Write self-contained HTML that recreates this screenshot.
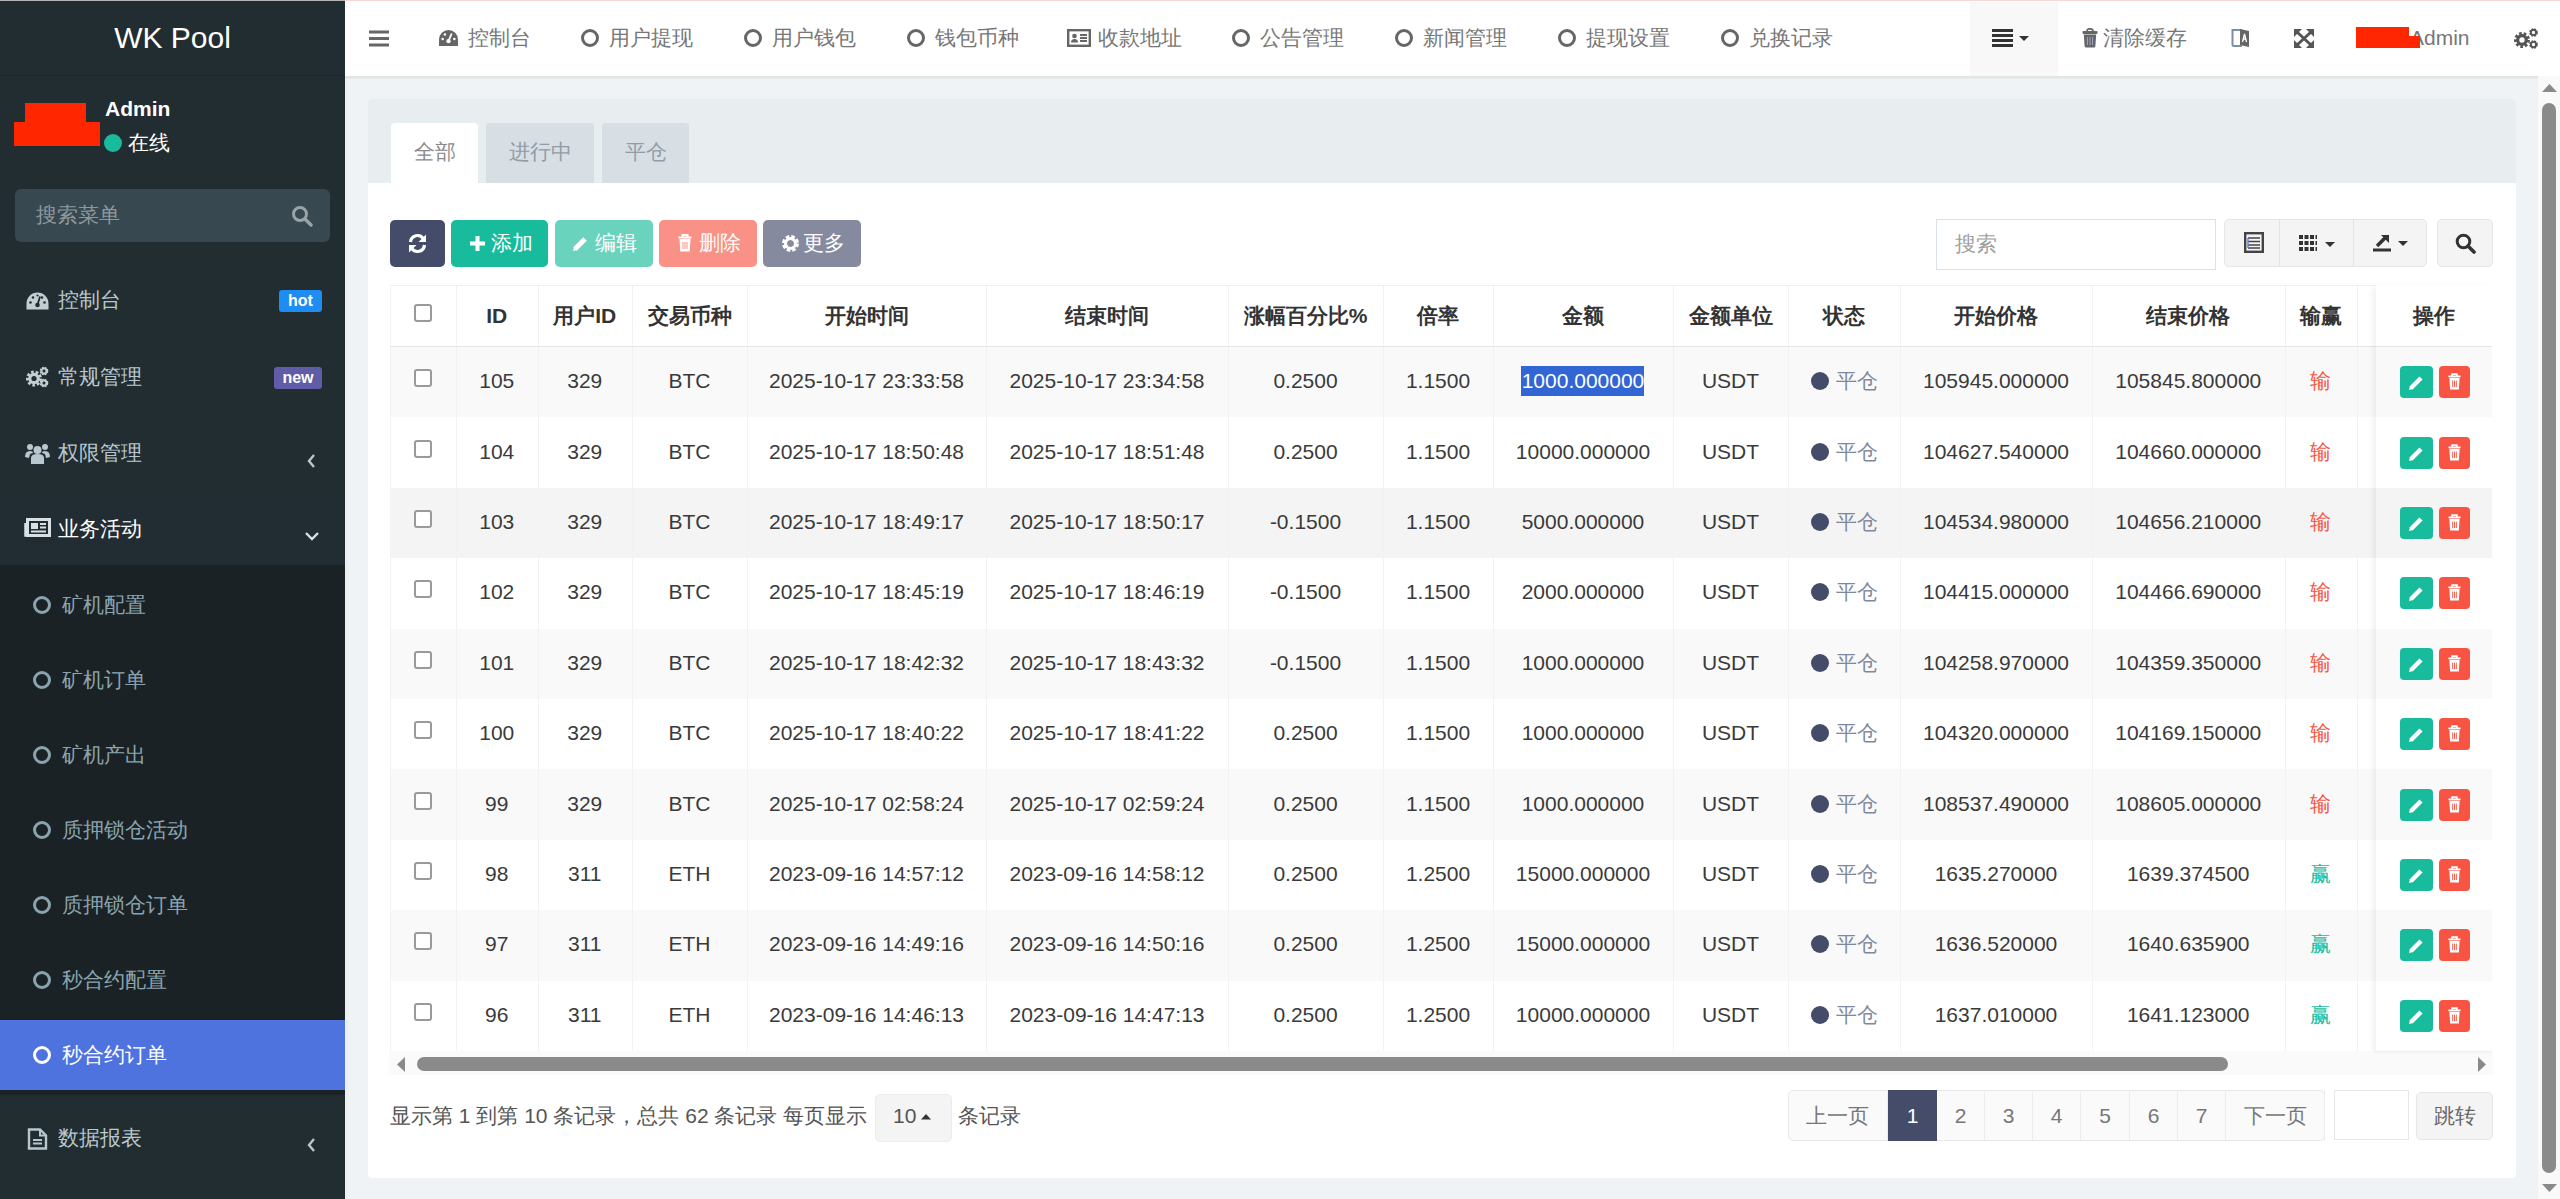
<!DOCTYPE html>
<html><head><meta charset="utf-8">
<style>
*{box-sizing:border-box;margin:0;padding:0}
html,body{width:2560px;height:1199px;overflow:hidden;background:#eff3f6;font-family:"Liberation Sans",sans-serif;font-size:21px;color:#333}
.abs{position:absolute}
#side{position:absolute;left:0;top:0;width:345px;height:1199px;background:#222d32}
#logo{position:absolute;left:0;top:0;width:345px;height:76px;border-bottom:1px solid #1d262a;color:#fff;font-size:30px;text-align:center;line-height:76px}
.menu{position:absolute;left:0;width:345px;color:#b8c7ce;font-size:21px}
.menu .t{position:absolute;left:58px}
.sub{background:#1b2226}
.sub .t{left:62px;color:#8aa4af}
.circ{position:absolute;left:33px;width:18px;height:18px;border:3px solid #8aa4af;border-radius:50%}
#hdr{position:absolute;left:345px;top:0;width:2215px;height:76px;background:#fff}
.nav{position:absolute;top:0;height:76px;line-height:76px;color:#777;font-size:21px}
.ncirc{position:absolute;top:29px;width:18px;height:18px;border:3px solid #666;border-radius:50%}




</style></head><body>
<div id="side">
  <div id="logo">WK Pool</div>
  <div class="abs" style="left:0;top:0;width:345px;height:1px;background:#b3b3b3"></div>
  
  <div class="abs" style="left:25px;top:103px;width:61px;height:20px;background:#ff2600"></div>
  <div class="abs" style="left:14px;top:122px;width:86px;height:24px;background:#ff2600"></div>
  <div class="abs" style="left:105px;top:95px;color:#fff;font-weight:bold;font-size:21px;line-height:28px">Admin</div>
  <div class="abs" style="left:104px;top:134px;width:18px;height:18px;border-radius:50%;background:#18bc9c"></div>
  <div class="abs" style="left:128px;top:128px;color:#fff;font-size:21px;line-height:30px">在线</div>
  <div class="abs" style="left:15px;top:189px;width:315px;height:53px;background:#374850;border-radius:6px"></div>
  <div class="abs" style="left:36px;top:200px;color:#8d989d;font-size:21px;line-height:30px">搜索菜单</div>
  <svg class="abs" style="left:291px;top:205px" width="22" height="22" viewBox="0 0 22 22"><circle cx="9" cy="9" r="6.5" fill="none" stroke="#9aa3a7" stroke-width="3"/><path d="M14 14 L20 20" stroke="#9aa3a7" stroke-width="3.4" stroke-linecap="round"/></svg>

  <div class="menu" style="top:262px;height:76px">
    <svg class="abs" style="left:26px;top:30px" width="23" height="18" viewBox="0 0 23 18"><path d="M11.5 0.5 A11 11 0 0 0 0.5 11.5 L0.5 17.5 L22.5 17.5 L22.5 11.5 A11 11 0 0 0 11.5 0.5Z" fill="#c3ced3"/><circle cx="11.5" cy="13" r="2.3" fill="#222d32"/><path d="M11.5 13 L14 4.5" stroke="#222d32" stroke-width="1.8"/><circle cx="4.5" cy="10.5" r="1.3" fill="#222d32"/><circle cx="7" cy="5.5" r="1.3" fill="#222d32"/><circle cx="11.5" cy="3.5" r="1.1" fill="#222d32"/><circle cx="16" cy="5.5" r="1.3" fill="#222d32"/><circle cx="18.5" cy="10.5" r="1.3" fill="#222d32"/></svg>
    <span class="t" style="top:23px;line-height:30px">控制台</span>
    <div class="abs" style="left:279px;top:28px;width:43px;height:22px;background:#1e8cf0;border-radius:3px;color:#fff;font-weight:bold;font-size:16px;line-height:22px;text-align:center">hot</div>
  </div>
  <div class="menu" style="top:339px;height:76px">
    <svg class="abs" style="left:26px;top:27px" width="23" height="22" viewBox="0 0 23 22"><circle cx="8" cy="12.5" r="6" fill="none" stroke="#c3ced3" stroke-width="4" stroke-dasharray="2.4 1.75"/><circle cx="8" cy="12.5" r="4.2" fill="none" stroke="#c3ced3" stroke-width="3.2"/><circle cx="18" cy="5" r="3" fill="none" stroke="#c3ced3" stroke-width="2.6" stroke-dasharray="1.6 0.8"/><circle cx="18" cy="5" r="2.6" fill="none" stroke="#c3ced3" stroke-width="1.8"/><circle cx="18" cy="17" r="3" fill="none" stroke="#c3ced3" stroke-width="2.6" stroke-dasharray="1.6 0.8"/><circle cx="18" cy="17" r="2.6" fill="none" stroke="#c3ced3" stroke-width="1.8"/></svg>
    <span class="t" style="top:23px;line-height:30px">常规管理</span>
    <div class="abs" style="left:274px;top:28px;width:48px;height:22px;background:#605ca8;border-radius:3px;color:#fff;font-weight:bold;font-size:16px;line-height:21px;text-align:center">new</div>
  </div>
  <div class="menu" style="top:415px;height:76px">
    <svg class="abs" style="left:25px;top:27px" width="25" height="22" viewBox="0 0 25 22"><circle cx="12.5" cy="8" r="4" fill="#b8c7ce"/><circle cx="5" cy="5" r="3" fill="#b8c7ce"/><circle cx="20" cy="5" r="3" fill="#b8c7ce"/><path d="M6 22 L6 16 Q6 12 12.5 12 Q19 12 19 16 L19 22Z" fill="#b8c7ce"/><path d="M0 15 Q0 9 5 9 Q8 9 8 11 L5 12 L4 16Z" fill="#b8c7ce"/><path d="M25 15 Q25 9 20 9 Q17 9 17 11 L20 12 L21 16Z" fill="#b8c7ce"/></svg>
    <span class="t" style="top:23px;line-height:30px">权限管理</span>
    <svg class="abs" style="left:306px;top:38px" width="10" height="16" viewBox="0 0 10 16"><path d="M8 2 L3 8 L8 14" fill="none" stroke="#b8c7ce" stroke-width="2.4"/></svg>
  </div>
  <div class="menu" style="top:491px;height:74px;background:#222d33">
    <svg class="abs" style="left:24px;top:27px" width="27" height="19" viewBox="0 0 27 19"><rect x="3.5" y="1.5" width="22" height="16" fill="none" stroke="#d8e0e3" stroke-width="3"/><path d="M1.5 5 L1.5 17.5 L4 17.5" fill="none" stroke="#d8e0e3" stroke-width="2.5"/><rect x="7" y="5" width="7" height="6" fill="#d8e0e3"/><path d="M16 6 H22 M16 9.5 H22 M7 13.5 H22" stroke="#d8e0e3" stroke-width="2"/></svg>
    <span class="t" style="top:23px;line-height:30px;color:#fff">业务活动</span>
    <svg class="abs" style="left:304px;top:40px" width="16" height="10" viewBox="0 0 16 10"><path d="M2 2 L8 8 L14 2" fill="none" stroke="#d8e0e3" stroke-width="2.4"/></svg>
  </div>
  <div class="menu sub" style="top:565px;height:530px">
    <div class="circ" style="top:31px"></div><span class="t" style="top:25px;line-height:30px">矿机配置</span>
    <div class="circ" style="top:106px"></div><span class="t" style="top:100px;line-height:30px">矿机订单</span>
    <div class="circ" style="top:181px"></div><span class="t" style="top:175px;line-height:30px">矿机产出</span>
    <div class="circ" style="top:256px"></div><span class="t" style="top:250px;line-height:30px">质押锁仓活动</span>
    <div class="circ" style="top:331px"></div><span class="t" style="top:325px;line-height:30px">质押锁仓订单</span>
    <div class="circ" style="top:406px"></div><span class="t" style="top:400px;line-height:30px">秒合约配置</span>
    <div class="abs" style="left:0;top:455px;width:345px;height:70px;background:#4e73df"></div>
    <div class="circ" style="top:481px;border-color:#fff"></div><span class="t" style="top:475px;line-height:30px;color:#fff">秒合约订单</span>
  </div>
  <div class="menu" style="top:1095px;height:100px">
    <svg class="abs" style="left:27px;top:33px" width="21" height="22" viewBox="0 0 21 22"><path d="M2 1.5 H13 L19 7.5 V20.5 H2Z" fill="none" stroke="#b8c7ce" stroke-width="2.4"/><path d="M13 1.5 V7.5 H19" fill="none" stroke="#b8c7ce" stroke-width="2"/><path d="M6 12 H15 M6 15.5 H15" stroke="#b8c7ce" stroke-width="2"/></svg>
    <span class="t" style="top:28px;line-height:30px">数据报表</span>
    <svg class="abs" style="left:306px;top:42px" width="10" height="16" viewBox="0 0 10 16"><path d="M8 2 L3 8 L8 14" fill="none" stroke="#b8c7ce" stroke-width="2.4"/></svg>
  </div>
</div>
<div class="abs" style="left:345px;top:76px;width:3px;height:1123px;background:#edf0f0"></div>
<div class="abs" style="left:345px;top:75px;width:2215px;height:1px;background:#f0f1f1"></div>
<div class="abs" style="left:345px;top:76px;width:2215px;height:2px;background:#e3e5e5"></div>
<div class="abs" style="left:345px;top:78px;width:2215px;height:1px;background:#e8ebed"></div>
<div id="hdr"><div class="abs" style="left:0;top:0;width:2215px;height:1px;background:#f6d6d6"></div><svg class="abs" style="left:24px;top:30px" width="20" height="17" viewBox="0 0 20 17"><path d="M0 2 H20 M0 8.5 H20 M0 15 H20" stroke="#666" stroke-width="3"/></svg><svg class="abs" style="left:93px;top:29px" width="21" height="18" viewBox="0 0 23 20"><path d="M11.5 1 A10.5 10.5 0 0 0 1 11.5 L1 19 L22 19 L22 11.5 A10.5 10.5 0 0 0 11.5 1Z" fill="#666"/><circle cx="11.5" cy="13.5" r="2.4" fill="#fff"/><path d="M11.5 13.5 L15 5" stroke="#fff" stroke-width="2"/><circle cx="5" cy="11" r="1.4" fill="#fff"/><circle cx="7.5" cy="6" r="1.4" fill="#fff"/><circle cx="18" cy="11" r="1.4" fill="#fff"/></svg><span class="nav" style="left:123px;color:#777">控制台</span><div class="ncirc" style="left:236px"></div><span class="nav" style="left:264px;color:#777">用户提现</span><div class="ncirc" style="left:399px"></div><span class="nav" style="left:427px;color:#777">用户钱包</span><div class="ncirc" style="left:562px"></div><span class="nav" style="left:590px;color:#777">钱包币种</span><div class="ncirc" style="left:887px"></div><span class="nav" style="left:915px;color:#777">公告管理</span><div class="ncirc" style="left:1050px"></div><span class="nav" style="left:1078px;color:#777">新闻管理</span><div class="ncirc" style="left:1213px"></div><span class="nav" style="left:1241px;color:#777">提现设置</span><div class="ncirc" style="left:1376px"></div><span class="nav" style="left:1404px;color:#777">兑换记录</span><svg class="abs" style="left:722px;top:29px" width="24" height="18" viewBox="0 0 24 18"><rect x="1.2" y="1.2" width="21.6" height="15.6" fill="none" stroke="#666" stroke-width="2.4"/><circle cx="7.5" cy="7" r="2.3" fill="#666"/><path d="M4 13.5 Q4 10 7.5 10 Q11 10 11 13.5Z" fill="#666"/><path d="M13 6 H20 M13 9 H20 M13 12 H20" stroke="#666" stroke-width="1.8"/></svg><span class="nav" style="left:753px;color:#777">收款地址</span><div class="abs" style="left:1625px;top:2px;width:88px;height:74px;background:#f8f8f8"></div><svg class="abs" style="left:1647px;top:28px" width="44" height="20" viewBox="0 0 44 20"><path d="M0 2.5 H21 M0 7.5 H21 M0 12.5 H21 M0 17.5 H21" stroke="#333" stroke-width="3.2"/><path d="M27 8 H37 L32 13Z" fill="#333"/></svg><svg class="abs" style="left:1737px;top:28px" width="16" height="20" viewBox="0 0 16 20"><path d="M5 3 Q5 0.8 8 0.8 Q11 0.8 11 3" fill="none" stroke="#666" stroke-width="1.8"/><rect x="0.5" y="3" width="15" height="3" rx="1" fill="#666"/><path d="M1.8 6.5 H14.2 L13.4 18 Q13.3 19.5 11.8 19.5 H4.2 Q2.7 19.5 2.6 18Z" fill="#666"/><path d="M5.5 9 V17 M8 9 V17 M10.5 9 V17" stroke="#9aa3c0" stroke-width="1"/></svg><span class="nav" style="left:1758px;color:#777">清除缓存</span><svg class="abs" style="left:1886px;top:27px" width="20" height="21" viewBox="0 0 20 21"><path d="M1.5 3 H10 V19 H3 Q1.5 19 1.5 17.5Z" fill="none" stroke="#7a8fa8" stroke-width="2"/><path d="M9 2 L18 4 V20 L9 18Z" fill="#666"/><path d="M11.5 15 L13.5 7 L15.5 15 M12.3 12 H14.7" stroke="#fff" stroke-width="1.3" fill="none"/></svg><svg class="abs" style="left:1949px;top:29px" width="20" height="19" viewBox="0 0 20 19"><path d="M3 3 L17 16 M17 3 L3 16" stroke="#555" stroke-width="3"/><path d="M0 0 H8 L0 8Z M20 0 H12 L20 8Z M0 19 H8 L0 11Z M20 19 H12 L20 11Z" fill="#555"/></svg><div class="abs" style="left:2011px;top:27px;width:53px;height:21px;background:#ff2600;z-index:2"></div><div class="abs" style="left:2011px;top:36px;width:64px;height:12px;background:#ff2600;z-index:2"></div><span class="nav" style="left:2065px;color:#777">Admin</span><svg class="abs" style="left:2168px;top:28px" width="26" height="21" viewBox="0 0 26 21"><circle cx="9" cy="12" r="6" fill="none" stroke="#555" stroke-width="4" stroke-dasharray="2.4 1.75"/><circle cx="9" cy="12" r="4.3" fill="none" stroke="#555" stroke-width="3.2"/><circle cx="20.5" cy="4.5" r="3" fill="none" stroke="#555" stroke-width="2.6" stroke-dasharray="1.6 0.8"/><circle cx="20.5" cy="4.5" r="2.6" fill="none" stroke="#555" stroke-width="1.8"/><circle cx="20.5" cy="16.5" r="3" fill="none" stroke="#555" stroke-width="2.6" stroke-dasharray="1.6 0.8"/><circle cx="20.5" cy="16.5" r="2.6" fill="none" stroke="#555" stroke-width="1.8"/></svg></div>
<div id="main">
<div class="abs" style="left:368px;top:99px;width:2148px;height:1079px;background:#fff;border-radius:4px"></div>
<div class="abs" style="left:368px;top:99px;width:2148px;height:84px;background:#e8edf0;border-radius:4px 4px 0 0"></div>
<div class="abs" style="left:391px;top:123px;width:87px;height:60px;background:#fff;border-radius:4px 4px 0 0;color:#8a8a8a;text-align:center;line-height:58px">全部</div>
<div class="abs" style="left:486px;top:123px;width:108px;height:60px;background:#d7dfe5;border-radius:4px 4px 0 0;color:#929ca7;text-align:center;line-height:58px">进行中</div>
<div class="abs" style="left:602px;top:123px;width:87px;height:60px;background:#d7dfe5;border-radius:4px 4px 0 0;color:#929ca7;text-align:center;line-height:58px">平仓</div>
<div class="abs" style="left:390px;top:220px;width:55px;height:47px;background:#444c69;border-radius:5px"></div>
<svg class="abs" style="left:407px;top:233px" width="21" height="21" viewBox="0 0 21 21"><path d="M3.5 9 A7 7 0 0 1 16.5 6" fill="none" stroke="#fff" stroke-width="3.2"/><path d="M19 1.5 V9 H11.5Z" fill="#fff"/><path d="M17.5 12 A7 7 0 0 1 4.5 15" fill="none" stroke="#fff" stroke-width="3.2"/><path d="M2 19.5 V12 H9.5Z" fill="#fff"/></svg>
<div class="abs" style="left:451px;top:220px;width:97px;height:47px;background:#18bc9c;border-radius:5px"></div>
<svg class="abs" style="left:469px;top:235px" width="17" height="17" viewBox="0 0 17 17"><path d="M8.5 1 V16 M1 8.5 H16" stroke="#fff" stroke-width="4"/></svg>
<span class="abs" style="left:491px;top:228px;line-height:30px;color:#fff;font-size:21px">添加</span>
<div class="abs" style="left:555px;top:220px;width:98px;height:47px;background:#6ad3bd;border-radius:5px"></div>
<svg class="abs" style="left:572px;top:235px" width="17" height="17" viewBox="0 0 17 17"><path d="M3 14 L13 4" stroke="#fff" stroke-width="5"/><path d="M1 16 L2 12 L5 15Z" fill="#fff"/></svg>
<span class="abs" style="left:595px;top:228px;line-height:30px;color:#fff;font-size:21px">编辑</span>
<div class="abs" style="left:659px;top:220px;width:98px;height:47px;background:#fa9186;border-radius:5px"></div>
<svg class="abs" style="left:678px;top:234px" width="14" height="18" viewBox="0 0 14 18"><path d="M0.5 3.5 H13.5 M4.5 3.5 V1 H9.5 V3.5" stroke="#fff" stroke-width="2" fill="none"/><path d="M1.5 5 H12.5 L11.7 17.5 H2.3Z" fill="#fff"/><path d="M5 8 V15 M7 8 V15 M9 8 V15" stroke="#fa9186" stroke-width="1"/></svg>
<span class="abs" style="left:699px;top:228px;line-height:30px;color:#fff;font-size:21px">删除</span>
<div class="abs" style="left:763px;top:220px;width:98px;height:47px;background:#858a9e;border-radius:5px"></div>
<svg class="abs" style="left:781px;top:234px" width="19" height="19" viewBox="0 0 19 19"><circle cx="9.5" cy="9.5" r="6" fill="none" stroke="#fff" stroke-width="5" stroke-dasharray="3 1.7"/><circle cx="9.5" cy="9.5" r="5" fill="none" stroke="#fff" stroke-width="3"/></svg>
<span class="abs" style="left:803px;top:228px;line-height:30px;color:#fff;font-size:21px">更多</span>
<div class="abs" style="left:1936px;top:219px;width:280px;height:51px;border:1px solid #d9e0e6;background:#fff"></div>
<span class="abs" style="left:1955px;top:229px;line-height:30px;color:#a0a0a0">搜索</span>
<div class="abs" style="left:2224px;top:219px;width:203px;height:48px;border:1px solid #e6e6e6;background:#f4f4f4;border-radius:5px"></div>
<div class="abs" style="left:2279px;top:219px;width:1px;height:48px;background:#e3e3e3"></div>
<div class="abs" style="left:2353px;top:219px;width:1px;height:48px;background:#e3e3e3"></div>
<svg class="abs" style="left:2244px;top:232px" width="20" height="21" viewBox="0 0 20 21"><rect x="1.2" y="1.2" width="17.6" height="18.6" fill="none" stroke="#444" stroke-width="2.4"/><path d="M4 6 H16 M4 9.5 H16 M4 13 H16 M4 16 H16" stroke="#444" stroke-width="1.6"/><path d="M4 6 V16" stroke="#5d7fd6" stroke-width="1.4"/></svg>
<svg class="abs" style="left:2299px;top:234px" width="40" height="18" viewBox="0 0 40 18"><path d="M0 3 H18 M0 9 H18 M0 15 H18" stroke="#333" stroke-width="4" stroke-dasharray="4 1.5"/><path d="M26 8 H36 L31 13Z" fill="#333"/></svg>
<svg class="abs" style="left:2372px;top:232px" width="40" height="20" viewBox="0 0 40 20"><path d="M1 18 H19" stroke="#333" stroke-width="3"/><path d="M5 14 L13 6" stroke="#333" stroke-width="3.5"/><path d="M9 3 H17 V11Z" fill="#333"/><path d="M26 9 H36 L31 14Z" fill="#333"/></svg>
<div class="abs" style="left:2437px;top:219px;width:56px;height:48px;border:1px solid #e6e6e6;background:#f4f4f4;border-radius:5px"></div>
<svg class="abs" style="left:2455px;top:233px" width="21" height="21" viewBox="0 0 21 21"><circle cx="8.5" cy="8.5" r="6.3" fill="none" stroke="#333" stroke-width="3"/><path d="M13 13 L19 19" stroke="#333" stroke-width="3.6" stroke-linecap="round"/></svg>
<div class="abs" style="left:390px;top:285px;width:2102px;height:62px;background:#fff;border-top:1px solid #f0f0f0"></div>
<div class="abs" style="left:390px;top:347.0px;width:2102px;height:70.4px;background:#f9f9f9"></div>
<div class="abs" style="left:390px;top:417.4px;width:2102px;height:70.4px;background:#fff"></div>
<div class="abs" style="left:390px;top:487.8px;width:2102px;height:70.4px;background:#f4f4f4"></div>
<div class="abs" style="left:390px;top:558.2px;width:2102px;height:70.4px;background:#fff"></div>
<div class="abs" style="left:390px;top:628.6px;width:2102px;height:70.4px;background:#f9f9f9"></div>
<div class="abs" style="left:390px;top:699.0px;width:2102px;height:70.4px;background:#fff"></div>
<div class="abs" style="left:390px;top:769.4px;width:2102px;height:70.4px;background:#f9f9f9"></div>
<div class="abs" style="left:390px;top:839.8px;width:2102px;height:70.4px;background:#fff"></div>
<div class="abs" style="left:390px;top:910.2px;width:2102px;height:70.4px;background:#f9f9f9"></div>
<div class="abs" style="left:390px;top:980.6px;width:2102px;height:70.4px;background:#fff"></div>
<div class="abs" style="left:390px;top:285px;width:1px;height:766.0px;background:#f2f2f2"></div>
<div class="abs" style="left:456px;top:285px;width:1px;height:766.0px;background:#f2f2f2"></div>
<div class="abs" style="left:537.5px;top:285px;width:1px;height:766.0px;background:#f2f2f2"></div>
<div class="abs" style="left:632px;top:285px;width:1px;height:766.0px;background:#f2f2f2"></div>
<div class="abs" style="left:747px;top:285px;width:1px;height:766.0px;background:#f2f2f2"></div>
<div class="abs" style="left:986px;top:285px;width:1px;height:766.0px;background:#f2f2f2"></div>
<div class="abs" style="left:1228px;top:285px;width:1px;height:766.0px;background:#f2f2f2"></div>
<div class="abs" style="left:1383px;top:285px;width:1px;height:766.0px;background:#f2f2f2"></div>
<div class="abs" style="left:1493px;top:285px;width:1px;height:766.0px;background:#f2f2f2"></div>
<div class="abs" style="left:1673px;top:285px;width:1px;height:766.0px;background:#f2f2f2"></div>
<div class="abs" style="left:1788px;top:285px;width:1px;height:766.0px;background:#f2f2f2"></div>
<div class="abs" style="left:1900px;top:285px;width:1px;height:766.0px;background:#f2f2f2"></div>
<div class="abs" style="left:2092px;top:285px;width:1px;height:766.0px;background:#f2f2f2"></div>
<div class="abs" style="left:2284.5px;top:285px;width:1px;height:766.0px;background:#f2f2f2"></div>
<div class="abs" style="left:2357px;top:285px;width:1px;height:766.0px;background:#f2f2f2"></div>
<div class="abs" style="left:390px;top:346px;width:2102px;height:1px;background:#e4e4e4"></div>
<div class="abs" style="left:456px;top:285px;width:81.5px;height:62px;line-height:62px;text-align:center;font-weight:bold;color:#333">ID</div>
<div class="abs" style="left:537.5px;top:285px;width:94.5px;height:62px;line-height:62px;text-align:center;font-weight:bold;color:#333">用户ID</div>
<div class="abs" style="left:632px;top:285px;width:115px;height:62px;line-height:62px;text-align:center;font-weight:bold;color:#333">交易币种</div>
<div class="abs" style="left:747px;top:285px;width:239px;height:62px;line-height:62px;text-align:center;font-weight:bold;color:#333">开始时间</div>
<div class="abs" style="left:986px;top:285px;width:242px;height:62px;line-height:62px;text-align:center;font-weight:bold;color:#333">结束时间</div>
<div class="abs" style="left:1228px;top:285px;width:155px;height:62px;line-height:62px;text-align:center;font-weight:bold;color:#333">涨幅百分比%</div>
<div class="abs" style="left:1383px;top:285px;width:110px;height:62px;line-height:62px;text-align:center;font-weight:bold;color:#333">倍率</div>
<div class="abs" style="left:1493px;top:285px;width:180px;height:62px;line-height:62px;text-align:center;font-weight:bold;color:#333">金额</div>
<div class="abs" style="left:1673px;top:285px;width:115px;height:62px;line-height:62px;text-align:center;font-weight:bold;color:#333">金额单位</div>
<div class="abs" style="left:1788px;top:285px;width:112px;height:62px;line-height:62px;text-align:center;font-weight:bold;color:#333">状态</div>
<div class="abs" style="left:1900px;top:285px;width:192px;height:62px;line-height:62px;text-align:center;font-weight:bold;color:#333">开始价格</div>
<div class="abs" style="left:2092px;top:285px;width:192.5px;height:62px;line-height:62px;text-align:center;font-weight:bold;color:#333">结束价格</div>
<div class="abs" style="left:2284.5px;top:285px;width:72.5px;height:62px;line-height:62px;text-align:center;font-weight:bold;color:#333">输赢</div>
<div class="abs" style="left:414px;top:304px;width:18px;height:18px;border:2px solid #9a9a9a;border-radius:3px;background:#fff"></div>
<div class="abs" style="left:414px;top:369px;width:18px;height:18px;border:2px solid #9a9a9a;border-radius:3px;background:#fff"></div>
<div class="abs" style="left:456px;top:366.2px;width:81.5px;line-height:30px;text-align:center;color:#3a3a3a">105</div>
<div class="abs" style="left:537.5px;top:366.2px;width:94.5px;line-height:30px;text-align:center;color:#3a3a3a">329</div>
<div class="abs" style="left:632px;top:366.2px;width:115px;line-height:30px;text-align:center;color:#3a3a3a">BTC</div>
<div class="abs" style="left:747px;top:366.2px;width:239px;line-height:30px;text-align:center;color:#3a3a3a">2025-10-17 23:33:58</div>
<div class="abs" style="left:986px;top:366.2px;width:242px;line-height:30px;text-align:center;color:#3a3a3a">2025-10-17 23:34:58</div>
<div class="abs" style="left:1228px;top:366.2px;width:155px;line-height:30px;text-align:center;color:#3a3a3a">0.2500</div>
<div class="abs" style="left:1383px;top:366.2px;width:110px;line-height:30px;text-align:center;color:#3a3a3a">1.1500</div>
<div class="abs" style="left:1521px;top:366px;width:123px;height:30px;background:#3166d4"></div>
<div class="abs" style="left:1493px;top:366.2px;width:180px;line-height:30px;text-align:center;color:#fff">1000.000000</div>
<div class="abs" style="left:1673px;top:366.2px;width:115px;line-height:30px;text-align:center;color:#3a3a3a">USDT</div>
<div class="abs" style="left:1811px;top:372.2px;width:18px;height:18px;border-radius:50%;background:#444c69"></div>
<span class="abs" style="left:1836px;top:366.2px;line-height:30px;color:#7e889d">平仓</span>
<div class="abs" style="left:1900px;top:366.2px;width:192px;line-height:30px;text-align:center;color:#3a3a3a">105945.000000</div>
<div class="abs" style="left:2092px;top:366.2px;width:192.5px;line-height:30px;text-align:center;color:#3a3a3a">105845.800000</div>
<div class="abs" style="left:2284.5px;top:366.2px;width:72.5px;line-height:30px;text-align:center;color:#f75444">输</div>
<div class="abs" style="left:414px;top:440px;width:18px;height:18px;border:2px solid #9a9a9a;border-radius:3px;background:#fff"></div>
<div class="abs" style="left:456px;top:436.6px;width:81.5px;line-height:30px;text-align:center;color:#3a3a3a">104</div>
<div class="abs" style="left:537.5px;top:436.6px;width:94.5px;line-height:30px;text-align:center;color:#3a3a3a">329</div>
<div class="abs" style="left:632px;top:436.6px;width:115px;line-height:30px;text-align:center;color:#3a3a3a">BTC</div>
<div class="abs" style="left:747px;top:436.6px;width:239px;line-height:30px;text-align:center;color:#3a3a3a">2025-10-17 18:50:48</div>
<div class="abs" style="left:986px;top:436.6px;width:242px;line-height:30px;text-align:center;color:#3a3a3a">2025-10-17 18:51:48</div>
<div class="abs" style="left:1228px;top:436.6px;width:155px;line-height:30px;text-align:center;color:#3a3a3a">0.2500</div>
<div class="abs" style="left:1383px;top:436.6px;width:110px;line-height:30px;text-align:center;color:#3a3a3a">1.1500</div>
<div class="abs" style="left:1493px;top:436.6px;width:180px;line-height:30px;text-align:center;color:#3a3a3a">10000.000000</div>
<div class="abs" style="left:1673px;top:436.6px;width:115px;line-height:30px;text-align:center;color:#3a3a3a">USDT</div>
<div class="abs" style="left:1811px;top:442.6px;width:18px;height:18px;border-radius:50%;background:#444c69"></div>
<span class="abs" style="left:1836px;top:436.6px;line-height:30px;color:#7e889d">平仓</span>
<div class="abs" style="left:1900px;top:436.6px;width:192px;line-height:30px;text-align:center;color:#3a3a3a">104627.540000</div>
<div class="abs" style="left:2092px;top:436.6px;width:192.5px;line-height:30px;text-align:center;color:#3a3a3a">104660.000000</div>
<div class="abs" style="left:2284.5px;top:436.6px;width:72.5px;line-height:30px;text-align:center;color:#f75444">输</div>
<div class="abs" style="left:414px;top:510px;width:18px;height:18px;border:2px solid #9a9a9a;border-radius:3px;background:#fff"></div>
<div class="abs" style="left:456px;top:507.0px;width:81.5px;line-height:30px;text-align:center;color:#3a3a3a">103</div>
<div class="abs" style="left:537.5px;top:507.0px;width:94.5px;line-height:30px;text-align:center;color:#3a3a3a">329</div>
<div class="abs" style="left:632px;top:507.0px;width:115px;line-height:30px;text-align:center;color:#3a3a3a">BTC</div>
<div class="abs" style="left:747px;top:507.0px;width:239px;line-height:30px;text-align:center;color:#3a3a3a">2025-10-17 18:49:17</div>
<div class="abs" style="left:986px;top:507.0px;width:242px;line-height:30px;text-align:center;color:#3a3a3a">2025-10-17 18:50:17</div>
<div class="abs" style="left:1228px;top:507.0px;width:155px;line-height:30px;text-align:center;color:#3a3a3a">-0.1500</div>
<div class="abs" style="left:1383px;top:507.0px;width:110px;line-height:30px;text-align:center;color:#3a3a3a">1.1500</div>
<div class="abs" style="left:1493px;top:507.0px;width:180px;line-height:30px;text-align:center;color:#3a3a3a">5000.000000</div>
<div class="abs" style="left:1673px;top:507.0px;width:115px;line-height:30px;text-align:center;color:#3a3a3a">USDT</div>
<div class="abs" style="left:1811px;top:513.0px;width:18px;height:18px;border-radius:50%;background:#444c69"></div>
<span class="abs" style="left:1836px;top:507.0px;line-height:30px;color:#7e889d">平仓</span>
<div class="abs" style="left:1900px;top:507.0px;width:192px;line-height:30px;text-align:center;color:#3a3a3a">104534.980000</div>
<div class="abs" style="left:2092px;top:507.0px;width:192.5px;line-height:30px;text-align:center;color:#3a3a3a">104656.210000</div>
<div class="abs" style="left:2284.5px;top:507.0px;width:72.5px;line-height:30px;text-align:center;color:#f75444">输</div>
<div class="abs" style="left:414px;top:580px;width:18px;height:18px;border:2px solid #9a9a9a;border-radius:3px;background:#fff"></div>
<div class="abs" style="left:456px;top:577.4px;width:81.5px;line-height:30px;text-align:center;color:#3a3a3a">102</div>
<div class="abs" style="left:537.5px;top:577.4px;width:94.5px;line-height:30px;text-align:center;color:#3a3a3a">329</div>
<div class="abs" style="left:632px;top:577.4px;width:115px;line-height:30px;text-align:center;color:#3a3a3a">BTC</div>
<div class="abs" style="left:747px;top:577.4px;width:239px;line-height:30px;text-align:center;color:#3a3a3a">2025-10-17 18:45:19</div>
<div class="abs" style="left:986px;top:577.4px;width:242px;line-height:30px;text-align:center;color:#3a3a3a">2025-10-17 18:46:19</div>
<div class="abs" style="left:1228px;top:577.4px;width:155px;line-height:30px;text-align:center;color:#3a3a3a">-0.1500</div>
<div class="abs" style="left:1383px;top:577.4px;width:110px;line-height:30px;text-align:center;color:#3a3a3a">1.1500</div>
<div class="abs" style="left:1493px;top:577.4px;width:180px;line-height:30px;text-align:center;color:#3a3a3a">2000.000000</div>
<div class="abs" style="left:1673px;top:577.4px;width:115px;line-height:30px;text-align:center;color:#3a3a3a">USDT</div>
<div class="abs" style="left:1811px;top:583.4px;width:18px;height:18px;border-radius:50%;background:#444c69"></div>
<span class="abs" style="left:1836px;top:577.4px;line-height:30px;color:#7e889d">平仓</span>
<div class="abs" style="left:1900px;top:577.4px;width:192px;line-height:30px;text-align:center;color:#3a3a3a">104415.000000</div>
<div class="abs" style="left:2092px;top:577.4px;width:192.5px;line-height:30px;text-align:center;color:#3a3a3a">104466.690000</div>
<div class="abs" style="left:2284.5px;top:577.4px;width:72.5px;line-height:30px;text-align:center;color:#f75444">输</div>
<div class="abs" style="left:414px;top:651px;width:18px;height:18px;border:2px solid #9a9a9a;border-radius:3px;background:#fff"></div>
<div class="abs" style="left:456px;top:647.8px;width:81.5px;line-height:30px;text-align:center;color:#3a3a3a">101</div>
<div class="abs" style="left:537.5px;top:647.8px;width:94.5px;line-height:30px;text-align:center;color:#3a3a3a">329</div>
<div class="abs" style="left:632px;top:647.8px;width:115px;line-height:30px;text-align:center;color:#3a3a3a">BTC</div>
<div class="abs" style="left:747px;top:647.8px;width:239px;line-height:30px;text-align:center;color:#3a3a3a">2025-10-17 18:42:32</div>
<div class="abs" style="left:986px;top:647.8px;width:242px;line-height:30px;text-align:center;color:#3a3a3a">2025-10-17 18:43:32</div>
<div class="abs" style="left:1228px;top:647.8px;width:155px;line-height:30px;text-align:center;color:#3a3a3a">-0.1500</div>
<div class="abs" style="left:1383px;top:647.8px;width:110px;line-height:30px;text-align:center;color:#3a3a3a">1.1500</div>
<div class="abs" style="left:1493px;top:647.8px;width:180px;line-height:30px;text-align:center;color:#3a3a3a">1000.000000</div>
<div class="abs" style="left:1673px;top:647.8px;width:115px;line-height:30px;text-align:center;color:#3a3a3a">USDT</div>
<div class="abs" style="left:1811px;top:653.8px;width:18px;height:18px;border-radius:50%;background:#444c69"></div>
<span class="abs" style="left:1836px;top:647.8px;line-height:30px;color:#7e889d">平仓</span>
<div class="abs" style="left:1900px;top:647.8px;width:192px;line-height:30px;text-align:center;color:#3a3a3a">104258.970000</div>
<div class="abs" style="left:2092px;top:647.8px;width:192.5px;line-height:30px;text-align:center;color:#3a3a3a">104359.350000</div>
<div class="abs" style="left:2284.5px;top:647.8px;width:72.5px;line-height:30px;text-align:center;color:#f75444">输</div>
<div class="abs" style="left:414px;top:721px;width:18px;height:18px;border:2px solid #9a9a9a;border-radius:3px;background:#fff"></div>
<div class="abs" style="left:456px;top:718.2px;width:81.5px;line-height:30px;text-align:center;color:#3a3a3a">100</div>
<div class="abs" style="left:537.5px;top:718.2px;width:94.5px;line-height:30px;text-align:center;color:#3a3a3a">329</div>
<div class="abs" style="left:632px;top:718.2px;width:115px;line-height:30px;text-align:center;color:#3a3a3a">BTC</div>
<div class="abs" style="left:747px;top:718.2px;width:239px;line-height:30px;text-align:center;color:#3a3a3a">2025-10-17 18:40:22</div>
<div class="abs" style="left:986px;top:718.2px;width:242px;line-height:30px;text-align:center;color:#3a3a3a">2025-10-17 18:41:22</div>
<div class="abs" style="left:1228px;top:718.2px;width:155px;line-height:30px;text-align:center;color:#3a3a3a">0.2500</div>
<div class="abs" style="left:1383px;top:718.2px;width:110px;line-height:30px;text-align:center;color:#3a3a3a">1.1500</div>
<div class="abs" style="left:1493px;top:718.2px;width:180px;line-height:30px;text-align:center;color:#3a3a3a">1000.000000</div>
<div class="abs" style="left:1673px;top:718.2px;width:115px;line-height:30px;text-align:center;color:#3a3a3a">USDT</div>
<div class="abs" style="left:1811px;top:724.2px;width:18px;height:18px;border-radius:50%;background:#444c69"></div>
<span class="abs" style="left:1836px;top:718.2px;line-height:30px;color:#7e889d">平仓</span>
<div class="abs" style="left:1900px;top:718.2px;width:192px;line-height:30px;text-align:center;color:#3a3a3a">104320.000000</div>
<div class="abs" style="left:2092px;top:718.2px;width:192.5px;line-height:30px;text-align:center;color:#3a3a3a">104169.150000</div>
<div class="abs" style="left:2284.5px;top:718.2px;width:72.5px;line-height:30px;text-align:center;color:#f75444">输</div>
<div class="abs" style="left:414px;top:792px;width:18px;height:18px;border:2px solid #9a9a9a;border-radius:3px;background:#fff"></div>
<div class="abs" style="left:456px;top:788.6px;width:81.5px;line-height:30px;text-align:center;color:#3a3a3a">99</div>
<div class="abs" style="left:537.5px;top:788.6px;width:94.5px;line-height:30px;text-align:center;color:#3a3a3a">329</div>
<div class="abs" style="left:632px;top:788.6px;width:115px;line-height:30px;text-align:center;color:#3a3a3a">BTC</div>
<div class="abs" style="left:747px;top:788.6px;width:239px;line-height:30px;text-align:center;color:#3a3a3a">2025-10-17 02:58:24</div>
<div class="abs" style="left:986px;top:788.6px;width:242px;line-height:30px;text-align:center;color:#3a3a3a">2025-10-17 02:59:24</div>
<div class="abs" style="left:1228px;top:788.6px;width:155px;line-height:30px;text-align:center;color:#3a3a3a">0.2500</div>
<div class="abs" style="left:1383px;top:788.6px;width:110px;line-height:30px;text-align:center;color:#3a3a3a">1.1500</div>
<div class="abs" style="left:1493px;top:788.6px;width:180px;line-height:30px;text-align:center;color:#3a3a3a">1000.000000</div>
<div class="abs" style="left:1673px;top:788.6px;width:115px;line-height:30px;text-align:center;color:#3a3a3a">USDT</div>
<div class="abs" style="left:1811px;top:794.6px;width:18px;height:18px;border-radius:50%;background:#444c69"></div>
<span class="abs" style="left:1836px;top:788.6px;line-height:30px;color:#7e889d">平仓</span>
<div class="abs" style="left:1900px;top:788.6px;width:192px;line-height:30px;text-align:center;color:#3a3a3a">108537.490000</div>
<div class="abs" style="left:2092px;top:788.6px;width:192.5px;line-height:30px;text-align:center;color:#3a3a3a">108605.000000</div>
<div class="abs" style="left:2284.5px;top:788.6px;width:72.5px;line-height:30px;text-align:center;color:#f75444">输</div>
<div class="abs" style="left:414px;top:862px;width:18px;height:18px;border:2px solid #9a9a9a;border-radius:3px;background:#fff"></div>
<div class="abs" style="left:456px;top:859.0px;width:81.5px;line-height:30px;text-align:center;color:#3a3a3a">98</div>
<div class="abs" style="left:537.5px;top:859.0px;width:94.5px;line-height:30px;text-align:center;color:#3a3a3a">311</div>
<div class="abs" style="left:632px;top:859.0px;width:115px;line-height:30px;text-align:center;color:#3a3a3a">ETH</div>
<div class="abs" style="left:747px;top:859.0px;width:239px;line-height:30px;text-align:center;color:#3a3a3a">2023-09-16 14:57:12</div>
<div class="abs" style="left:986px;top:859.0px;width:242px;line-height:30px;text-align:center;color:#3a3a3a">2023-09-16 14:58:12</div>
<div class="abs" style="left:1228px;top:859.0px;width:155px;line-height:30px;text-align:center;color:#3a3a3a">0.2500</div>
<div class="abs" style="left:1383px;top:859.0px;width:110px;line-height:30px;text-align:center;color:#3a3a3a">1.2500</div>
<div class="abs" style="left:1493px;top:859.0px;width:180px;line-height:30px;text-align:center;color:#3a3a3a">15000.000000</div>
<div class="abs" style="left:1673px;top:859.0px;width:115px;line-height:30px;text-align:center;color:#3a3a3a">USDT</div>
<div class="abs" style="left:1811px;top:865.0px;width:18px;height:18px;border-radius:50%;background:#444c69"></div>
<span class="abs" style="left:1836px;top:859.0px;line-height:30px;color:#7e889d">平仓</span>
<div class="abs" style="left:1900px;top:859.0px;width:192px;line-height:30px;text-align:center;color:#3a3a3a">1635.270000</div>
<div class="abs" style="left:2092px;top:859.0px;width:192.5px;line-height:30px;text-align:center;color:#3a3a3a">1639.374500</div>
<div class="abs" style="left:2284.5px;top:859.0px;width:72.5px;line-height:30px;text-align:center;color:#18bc9c">赢</div>
<div class="abs" style="left:414px;top:932px;width:18px;height:18px;border:2px solid #9a9a9a;border-radius:3px;background:#fff"></div>
<div class="abs" style="left:456px;top:929.4px;width:81.5px;line-height:30px;text-align:center;color:#3a3a3a">97</div>
<div class="abs" style="left:537.5px;top:929.4px;width:94.5px;line-height:30px;text-align:center;color:#3a3a3a">311</div>
<div class="abs" style="left:632px;top:929.4px;width:115px;line-height:30px;text-align:center;color:#3a3a3a">ETH</div>
<div class="abs" style="left:747px;top:929.4px;width:239px;line-height:30px;text-align:center;color:#3a3a3a">2023-09-16 14:49:16</div>
<div class="abs" style="left:986px;top:929.4px;width:242px;line-height:30px;text-align:center;color:#3a3a3a">2023-09-16 14:50:16</div>
<div class="abs" style="left:1228px;top:929.4px;width:155px;line-height:30px;text-align:center;color:#3a3a3a">0.2500</div>
<div class="abs" style="left:1383px;top:929.4px;width:110px;line-height:30px;text-align:center;color:#3a3a3a">1.2500</div>
<div class="abs" style="left:1493px;top:929.4px;width:180px;line-height:30px;text-align:center;color:#3a3a3a">15000.000000</div>
<div class="abs" style="left:1673px;top:929.4px;width:115px;line-height:30px;text-align:center;color:#3a3a3a">USDT</div>
<div class="abs" style="left:1811px;top:935.4px;width:18px;height:18px;border-radius:50%;background:#444c69"></div>
<span class="abs" style="left:1836px;top:929.4px;line-height:30px;color:#7e889d">平仓</span>
<div class="abs" style="left:1900px;top:929.4px;width:192px;line-height:30px;text-align:center;color:#3a3a3a">1636.520000</div>
<div class="abs" style="left:2092px;top:929.4px;width:192.5px;line-height:30px;text-align:center;color:#3a3a3a">1640.635900</div>
<div class="abs" style="left:2284.5px;top:929.4px;width:72.5px;line-height:30px;text-align:center;color:#18bc9c">赢</div>
<div class="abs" style="left:414px;top:1003px;width:18px;height:18px;border:2px solid #9a9a9a;border-radius:3px;background:#fff"></div>
<div class="abs" style="left:456px;top:999.8px;width:81.5px;line-height:30px;text-align:center;color:#3a3a3a">96</div>
<div class="abs" style="left:537.5px;top:999.8px;width:94.5px;line-height:30px;text-align:center;color:#3a3a3a">311</div>
<div class="abs" style="left:632px;top:999.8px;width:115px;line-height:30px;text-align:center;color:#3a3a3a">ETH</div>
<div class="abs" style="left:747px;top:999.8px;width:239px;line-height:30px;text-align:center;color:#3a3a3a">2023-09-16 14:46:13</div>
<div class="abs" style="left:986px;top:999.8px;width:242px;line-height:30px;text-align:center;color:#3a3a3a">2023-09-16 14:47:13</div>
<div class="abs" style="left:1228px;top:999.8px;width:155px;line-height:30px;text-align:center;color:#3a3a3a">0.2500</div>
<div class="abs" style="left:1383px;top:999.8px;width:110px;line-height:30px;text-align:center;color:#3a3a3a">1.2500</div>
<div class="abs" style="left:1493px;top:999.8px;width:180px;line-height:30px;text-align:center;color:#3a3a3a">10000.000000</div>
<div class="abs" style="left:1673px;top:999.8px;width:115px;line-height:30px;text-align:center;color:#3a3a3a">USDT</div>
<div class="abs" style="left:1811px;top:1005.8px;width:18px;height:18px;border-radius:50%;background:#444c69"></div>
<span class="abs" style="left:1836px;top:999.8px;line-height:30px;color:#7e889d">平仓</span>
<div class="abs" style="left:1900px;top:999.8px;width:192px;line-height:30px;text-align:center;color:#3a3a3a">1637.010000</div>
<div class="abs" style="left:2092px;top:999.8px;width:192.5px;line-height:30px;text-align:center;color:#3a3a3a">1641.123000</div>
<div class="abs" style="left:2284.5px;top:999.8px;width:72.5px;line-height:30px;text-align:center;color:#18bc9c">赢</div>
<div class="abs" style="left:2376px;top:285px;width:116px;height:766.0px;background:#fff;box-shadow:-3px 2px 6px rgba(0,0,0,.06)"></div>
<div class="abs" style="left:2376px;top:285px;width:116px;height:62px;line-height:62px;text-align:center;font-weight:bold;color:#333">操作</div>
<div class="abs" style="left:2376px;top:346px;width:116px;height:1px;background:#e4e4e4"></div>
<div class="abs" style="left:2376px;top:347.0px;width:116px;height:70.4px;background:#f9f9f9"></div>
<div class="abs" style="left:2400px;top:366.2px;width:33px;height:32px;background:#18bc9c;border-radius:4px"></div>
<svg class="abs" style="left:2408px;top:374.2px" width="17" height="17" viewBox="0 0 17 17"><path d="M3 14 L13 4" stroke="#fff" stroke-width="4.5"/><path d="M1 16 L2 12 L5 15Z" fill="#fff"/></svg>
<div class="abs" style="left:2439px;top:366.2px;width:31px;height:32px;background:#f75444;border-radius:4px"></div>
<svg class="abs" style="left:2448px;top:373.2px" width="13" height="17" viewBox="0 0 14 18"><path d="M0.5 3.5 H13.5 M4.5 3.5 V1 H9.5 V3.5" stroke="#fff" stroke-width="2" fill="none"/><path d="M1.5 5 H12.5 L11.7 17.5 H2.3Z" fill="#fff"/><path d="M5 8 V15 M7 8 V15 M9 8 V15" stroke="#f75444" stroke-width="1"/></svg>
<div class="abs" style="left:2376px;top:417.4px;width:116px;height:70.4px;background:#fff"></div>
<div class="abs" style="left:2400px;top:436.6px;width:33px;height:32px;background:#18bc9c;border-radius:4px"></div>
<svg class="abs" style="left:2408px;top:444.6px" width="17" height="17" viewBox="0 0 17 17"><path d="M3 14 L13 4" stroke="#fff" stroke-width="4.5"/><path d="M1 16 L2 12 L5 15Z" fill="#fff"/></svg>
<div class="abs" style="left:2439px;top:436.6px;width:31px;height:32px;background:#f75444;border-radius:4px"></div>
<svg class="abs" style="left:2448px;top:443.6px" width="13" height="17" viewBox="0 0 14 18"><path d="M0.5 3.5 H13.5 M4.5 3.5 V1 H9.5 V3.5" stroke="#fff" stroke-width="2" fill="none"/><path d="M1.5 5 H12.5 L11.7 17.5 H2.3Z" fill="#fff"/><path d="M5 8 V15 M7 8 V15 M9 8 V15" stroke="#f75444" stroke-width="1"/></svg>
<div class="abs" style="left:2376px;top:487.8px;width:116px;height:70.4px;background:#f4f4f4"></div>
<div class="abs" style="left:2400px;top:507.0px;width:33px;height:32px;background:#18bc9c;border-radius:4px"></div>
<svg class="abs" style="left:2408px;top:515.0px" width="17" height="17" viewBox="0 0 17 17"><path d="M3 14 L13 4" stroke="#fff" stroke-width="4.5"/><path d="M1 16 L2 12 L5 15Z" fill="#fff"/></svg>
<div class="abs" style="left:2439px;top:507.0px;width:31px;height:32px;background:#f75444;border-radius:4px"></div>
<svg class="abs" style="left:2448px;top:514.0px" width="13" height="17" viewBox="0 0 14 18"><path d="M0.5 3.5 H13.5 M4.5 3.5 V1 H9.5 V3.5" stroke="#fff" stroke-width="2" fill="none"/><path d="M1.5 5 H12.5 L11.7 17.5 H2.3Z" fill="#fff"/><path d="M5 8 V15 M7 8 V15 M9 8 V15" stroke="#f75444" stroke-width="1"/></svg>
<div class="abs" style="left:2376px;top:558.2px;width:116px;height:70.4px;background:#fff"></div>
<div class="abs" style="left:2400px;top:577.4px;width:33px;height:32px;background:#18bc9c;border-radius:4px"></div>
<svg class="abs" style="left:2408px;top:585.4px" width="17" height="17" viewBox="0 0 17 17"><path d="M3 14 L13 4" stroke="#fff" stroke-width="4.5"/><path d="M1 16 L2 12 L5 15Z" fill="#fff"/></svg>
<div class="abs" style="left:2439px;top:577.4px;width:31px;height:32px;background:#f75444;border-radius:4px"></div>
<svg class="abs" style="left:2448px;top:584.4px" width="13" height="17" viewBox="0 0 14 18"><path d="M0.5 3.5 H13.5 M4.5 3.5 V1 H9.5 V3.5" stroke="#fff" stroke-width="2" fill="none"/><path d="M1.5 5 H12.5 L11.7 17.5 H2.3Z" fill="#fff"/><path d="M5 8 V15 M7 8 V15 M9 8 V15" stroke="#f75444" stroke-width="1"/></svg>
<div class="abs" style="left:2376px;top:628.6px;width:116px;height:70.4px;background:#f9f9f9"></div>
<div class="abs" style="left:2400px;top:647.8px;width:33px;height:32px;background:#18bc9c;border-radius:4px"></div>
<svg class="abs" style="left:2408px;top:655.8px" width="17" height="17" viewBox="0 0 17 17"><path d="M3 14 L13 4" stroke="#fff" stroke-width="4.5"/><path d="M1 16 L2 12 L5 15Z" fill="#fff"/></svg>
<div class="abs" style="left:2439px;top:647.8px;width:31px;height:32px;background:#f75444;border-radius:4px"></div>
<svg class="abs" style="left:2448px;top:654.8px" width="13" height="17" viewBox="0 0 14 18"><path d="M0.5 3.5 H13.5 M4.5 3.5 V1 H9.5 V3.5" stroke="#fff" stroke-width="2" fill="none"/><path d="M1.5 5 H12.5 L11.7 17.5 H2.3Z" fill="#fff"/><path d="M5 8 V15 M7 8 V15 M9 8 V15" stroke="#f75444" stroke-width="1"/></svg>
<div class="abs" style="left:2376px;top:699.0px;width:116px;height:70.4px;background:#fff"></div>
<div class="abs" style="left:2400px;top:718.2px;width:33px;height:32px;background:#18bc9c;border-radius:4px"></div>
<svg class="abs" style="left:2408px;top:726.2px" width="17" height="17" viewBox="0 0 17 17"><path d="M3 14 L13 4" stroke="#fff" stroke-width="4.5"/><path d="M1 16 L2 12 L5 15Z" fill="#fff"/></svg>
<div class="abs" style="left:2439px;top:718.2px;width:31px;height:32px;background:#f75444;border-radius:4px"></div>
<svg class="abs" style="left:2448px;top:725.2px" width="13" height="17" viewBox="0 0 14 18"><path d="M0.5 3.5 H13.5 M4.5 3.5 V1 H9.5 V3.5" stroke="#fff" stroke-width="2" fill="none"/><path d="M1.5 5 H12.5 L11.7 17.5 H2.3Z" fill="#fff"/><path d="M5 8 V15 M7 8 V15 M9 8 V15" stroke="#f75444" stroke-width="1"/></svg>
<div class="abs" style="left:2376px;top:769.4px;width:116px;height:70.4px;background:#f9f9f9"></div>
<div class="abs" style="left:2400px;top:788.6px;width:33px;height:32px;background:#18bc9c;border-radius:4px"></div>
<svg class="abs" style="left:2408px;top:796.6px" width="17" height="17" viewBox="0 0 17 17"><path d="M3 14 L13 4" stroke="#fff" stroke-width="4.5"/><path d="M1 16 L2 12 L5 15Z" fill="#fff"/></svg>
<div class="abs" style="left:2439px;top:788.6px;width:31px;height:32px;background:#f75444;border-radius:4px"></div>
<svg class="abs" style="left:2448px;top:795.6px" width="13" height="17" viewBox="0 0 14 18"><path d="M0.5 3.5 H13.5 M4.5 3.5 V1 H9.5 V3.5" stroke="#fff" stroke-width="2" fill="none"/><path d="M1.5 5 H12.5 L11.7 17.5 H2.3Z" fill="#fff"/><path d="M5 8 V15 M7 8 V15 M9 8 V15" stroke="#f75444" stroke-width="1"/></svg>
<div class="abs" style="left:2376px;top:839.8px;width:116px;height:70.4px;background:#fff"></div>
<div class="abs" style="left:2400px;top:859.0px;width:33px;height:32px;background:#18bc9c;border-radius:4px"></div>
<svg class="abs" style="left:2408px;top:867.0px" width="17" height="17" viewBox="0 0 17 17"><path d="M3 14 L13 4" stroke="#fff" stroke-width="4.5"/><path d="M1 16 L2 12 L5 15Z" fill="#fff"/></svg>
<div class="abs" style="left:2439px;top:859.0px;width:31px;height:32px;background:#f75444;border-radius:4px"></div>
<svg class="abs" style="left:2448px;top:866.0px" width="13" height="17" viewBox="0 0 14 18"><path d="M0.5 3.5 H13.5 M4.5 3.5 V1 H9.5 V3.5" stroke="#fff" stroke-width="2" fill="none"/><path d="M1.5 5 H12.5 L11.7 17.5 H2.3Z" fill="#fff"/><path d="M5 8 V15 M7 8 V15 M9 8 V15" stroke="#f75444" stroke-width="1"/></svg>
<div class="abs" style="left:2376px;top:910.2px;width:116px;height:70.4px;background:#f9f9f9"></div>
<div class="abs" style="left:2400px;top:929.4px;width:33px;height:32px;background:#18bc9c;border-radius:4px"></div>
<svg class="abs" style="left:2408px;top:937.4px" width="17" height="17" viewBox="0 0 17 17"><path d="M3 14 L13 4" stroke="#fff" stroke-width="4.5"/><path d="M1 16 L2 12 L5 15Z" fill="#fff"/></svg>
<div class="abs" style="left:2439px;top:929.4px;width:31px;height:32px;background:#f75444;border-radius:4px"></div>
<svg class="abs" style="left:2448px;top:936.4px" width="13" height="17" viewBox="0 0 14 18"><path d="M0.5 3.5 H13.5 M4.5 3.5 V1 H9.5 V3.5" stroke="#fff" stroke-width="2" fill="none"/><path d="M1.5 5 H12.5 L11.7 17.5 H2.3Z" fill="#fff"/><path d="M5 8 V15 M7 8 V15 M9 8 V15" stroke="#f75444" stroke-width="1"/></svg>
<div class="abs" style="left:2376px;top:980.6px;width:116px;height:70.4px;background:#fff"></div>
<div class="abs" style="left:2400px;top:999.8px;width:33px;height:32px;background:#18bc9c;border-radius:4px"></div>
<svg class="abs" style="left:2408px;top:1007.8px" width="17" height="17" viewBox="0 0 17 17"><path d="M3 14 L13 4" stroke="#fff" stroke-width="4.5"/><path d="M1 16 L2 12 L5 15Z" fill="#fff"/></svg>
<div class="abs" style="left:2439px;top:999.8px;width:31px;height:32px;background:#f75444;border-radius:4px"></div>
<svg class="abs" style="left:2448px;top:1006.8px" width="13" height="17" viewBox="0 0 14 18"><path d="M0.5 3.5 H13.5 M4.5 3.5 V1 H9.5 V3.5" stroke="#fff" stroke-width="2" fill="none"/><path d="M1.5 5 H12.5 L11.7 17.5 H2.3Z" fill="#fff"/><path d="M5 8 V15 M7 8 V15 M9 8 V15" stroke="#f75444" stroke-width="1"/></svg>
<div class="abs" style="left:389px;top:1051.0px;width:2104px;height:24px;background:#fafafa"></div>
<svg class="abs" style="left:396px;top:1057px" width="10" height="15" viewBox="0 0 10 15"><path d="M9 0 V15 L1 7.5Z" fill="#8a8a8a"/></svg>
<svg class="abs" style="left:2477px;top:1057px" width="10" height="15" viewBox="0 0 10 15"><path d="M1 0 V15 L9 7.5Z" fill="#8a8a8a"/></svg>
<div class="abs" style="left:2374px;top:1051px;width:118px;height:3px;background:linear-gradient(#eeeeee,#fafafa)"></div>
<div class="abs" style="left:417px;top:1057px;width:1811px;height:14px;background:#8a8a8a;border-radius:7px"></div>
<span class="abs" style="left:390px;top:1101px;line-height:30px;color:#555">显示第 1 到第 10 条记录，总共 62 条记录 每页显示</span>
<div class="abs" style="left:875px;top:1094px;width:77px;height:48px;background:#f4f4f4;border:1px solid #ececec;border-radius:5px"></div>
<span class="abs" style="left:893px;top:1101px;line-height:30px;color:#555">10</span>
<svg class="abs" style="left:920px;top:1113px" width="12" height="7" viewBox="0 0 12 7"><path d="M1 6.5 L6 1 L11 6.5Z" fill="#333"/></svg>
<span class="abs" style="left:958px;top:1101px;line-height:30px;color:#555">条记录</span>
<div class="abs" style="left:1788px;top:1090px;width:537px;height:51px;background:#fafafa;border:1px solid #e8e8e8;border-radius:5px"></div>
<div class="abs" style="left:1788px;top:1090px;width:100px;height:51px;border-right:1px solid #ececec;color:#777;text-align:center;line-height:51px">上一页</div>
<div class="abs" style="left:1888px;top:1090px;width:49px;height:51px;background:#444c69;color:#fff;text-align:center;line-height:51px">1</div>
<div class="abs" style="left:1937px;top:1090px;width:48px;height:51px;border-right:1px solid #ececec;color:#777;text-align:center;line-height:51px">2</div>
<div class="abs" style="left:1985px;top:1090px;width:48px;height:51px;border-right:1px solid #ececec;color:#777;text-align:center;line-height:51px">3</div>
<div class="abs" style="left:2033px;top:1090px;width:48px;height:51px;border-right:1px solid #ececec;color:#777;text-align:center;line-height:51px">4</div>
<div class="abs" style="left:2081px;top:1090px;width:49px;height:51px;border-right:1px solid #ececec;color:#777;text-align:center;line-height:51px">5</div>
<div class="abs" style="left:2130px;top:1090px;width:48px;height:51px;border-right:1px solid #ececec;color:#777;text-align:center;line-height:51px">6</div>
<div class="abs" style="left:2178px;top:1090px;width:48px;height:51px;border-right:1px solid #ececec;color:#777;text-align:center;line-height:51px">7</div>
<div class="abs" style="left:2226px;top:1090px;width:99px;height:51px;border-right:1px solid #ececec;color:#777;text-align:center;line-height:51px">下一页</div>
<div class="abs" style="left:2334px;top:1090px;width:75px;height:50px;background:#fff;border:1px solid #e6e6e6"></div>
<div class="abs" style="left:2416px;top:1092px;width:77px;height:48px;background:#f4f4f4;border:1px solid #e6e6e6;border-radius:5px;color:#666;text-align:center;line-height:46px">跳转</div>
<div class="abs" style="left:2538px;top:76px;width:22px;height:1123px;background:#f9f9f9"></div>
<svg class="abs" style="left:2542px;top:84px" width="15" height="8" viewBox="0 0 15 8"><path d="M0 8 L7.5 0 L15 8Z" fill="#8a8a8a"/></svg>
<svg class="abs" style="left:2542px;top:1184px" width="15" height="8" viewBox="0 0 15 8"><path d="M0 0 L7.5 8 L15 0Z" fill="#8a8a8a"/></svg>
<div class="abs" style="left:2542px;top:103px;width:14px;height:1070px;background:#8a8a8a;border-radius:7px"></div>
</div>
</body></html>
